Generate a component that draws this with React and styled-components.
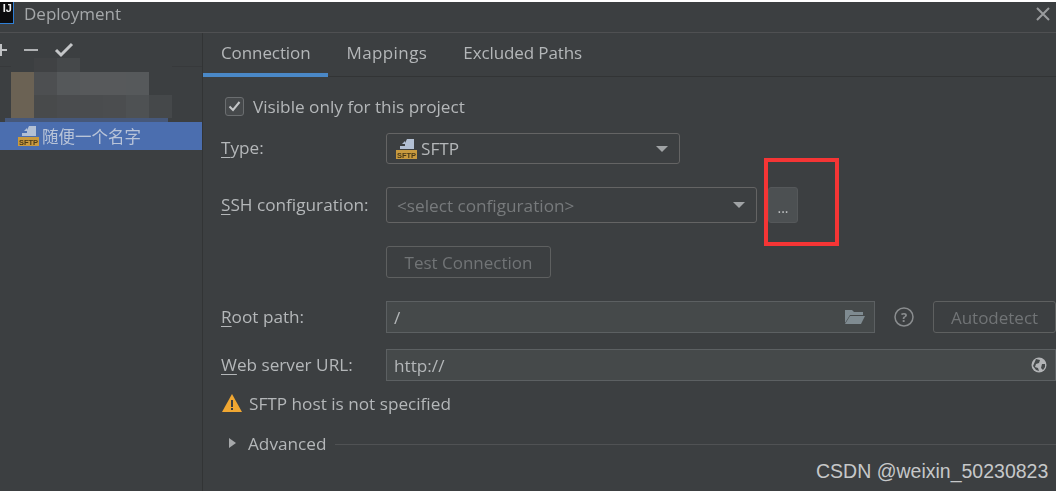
import React from 'react';
import styled, { createGlobalStyle } from 'styled-components';

const Global = createGlobalStyle`
  html, body { margin: 0; padding: 0; background: #fff; }
  body { width: 1064px; height: 491px; overflow: hidden; font-family: "Open Sans", "Noto Sans CJK SC", sans-serif; }
`;
const Page = styled.div`
  position: relative; width: 1056px; height: 489px; margin-top: 2px; overflow: hidden;
  background: #3c3f41;
`;
const Dialog = styled.div`
  display: flex; flex-direction: column; height: 100%; color: #b4b7b9; font-size: 17.2px;
  filter: blur(0.45px);
`;
const TitleBar = styled.header`
  flex: none; height: 31px; display: flex; align-items: flex-start; gap: 10px; box-sizing: border-box;
  border-bottom: 1px solid #4f5052; padding: 0 4px 0 0; color: #a5a8aa;
`;
const AppLogo = styled.div`
  width: 14px; height: 22px; box-sizing: border-box; background: #0c0c0e;
  border: 1px solid #2f7fd6; border-top: none; border-left: none; color: #eee; font: bold 11px/13px "Liberation Sans", sans-serif;
  text-align: right; padding-right: 1px; overflow: hidden;
`;
const Title = styled.span` flex: 1; font-size: 17px; line-height: 24px; `;
const Body = styled.div` flex: 1; display: flex; min-height: 0; `;
const Sidebar = styled.aside`
  flex: none; width: 203px; box-sizing: border-box; border-right: 1px solid #323435; display: flex; flex-direction: column;
`;
const Tools = styled.div`
  height: 34px; flex: none; box-sizing: border-box; display: flex; align-items: center; gap: 16px; margin-left: -6px;
  border-bottom: 1px solid #37393b;
`;
const Mosaic = styled.div`
  margin: -9px 0 0 11px; display: grid; grid-template-columns: repeat(7, 23px); grid-template-rows: 14px 23px 23px; filter: blur(0.6px);
`;
const Cell = styled.div` background: ${p => p.$c}; `;
const Sliver = styled.div` height: 4px; margin-left: 5px; width: 163px; background: #46587a; `;
const TreeRow = styled.div`
  height: 28px; background: #4b6eaf; display: flex; align-items: center; gap: 3px; padding-left: 17px; color: #b9c4d8; font-size: 16.5px;
`;
const Main = styled.main` flex: 1; min-width: 0; display: flex; flex-direction: column; `;
const Tabs = styled.nav`
  flex: none; height: 44px; display: flex; box-sizing: border-box; border-bottom: 1px solid #323435; font-size: 17px;
`;
const Tab = styled.div`
  box-sizing: border-box; height: 44px; display: flex; align-items: center; padding: 0 18px 1px;
  letter-spacing: ${p => p.$ls}px;
  border-bottom: 4px solid ${p => p.$active ? '#4a88c7' : 'transparent'};
`;
const Form = styled.div` flex: 1; padding: 19px 0 0 18px; display: flex; flex-direction: column; `;
const CheckRow = styled.label` display: flex; align-items: center; gap: 9px; height: 20px; margin-left: 4px; `;
const CheckBox = styled.span`
  width: 19px; height: 19px; box-sizing: border-box; border: 1px solid #6b6e70; border-radius: 3px; background: #46494b;
  display: flex; align-items: center; justify-content: center;
`;
const Row = styled.div`
  display: flex; align-items: center; height: ${p => p.$h}px; margin-top: ${p => p.$mt}px;
`;
const Label = styled.span` flex: none; width: 165px; margin-top: -2px; `;
const U = styled.span` text-decoration: underline; text-underline-offset: 3px; text-decoration-thickness: 1px; `;
const Combo = styled.div`
  box-sizing: border-box; width: ${p => p.$w}px; height: 100%; border: 1px solid #646464; border-radius: 3px;
  display: flex; align-items: center; padding: 0 11px 0 ${p => p.$pl || 8}px; gap: 4px; color: ${p => p.$dim ? '#777a7c' : '#b4b7b9'};
`;
const Grow = styled.span` flex: 1; `;
const Caret = styled.span`
  width: 0; height: 0; border-left: 6px solid transparent; border-right: 6px solid transparent; border-top: 6px solid #a0a3a5;
`;
const MoreBtn = styled.button`
  box-sizing: border-box; width: 30px; height: 100%; margin-left: 11px; border: 1px solid #55585a; border-radius: 3px; background: #4c5052;
  color: #c0c2c4; font: 14px/1 "Open Sans", sans-serif; padding: 6px 0 0;
`;
const Btn = styled.button`
  box-sizing: border-box; width: ${p => p.$w}px; height: 100%; border: 1px solid #5e6060; border-radius: 3px; background: transparent;
  color: #717476; font: 17px "Open Sans", sans-serif; padding: 0; margin-left: ${p => p.$ml || 0}px; flex: none; white-space: nowrap;
`;
const Field = styled.div`
  box-sizing: border-box; width: ${p => p.$w}px; height: 100%; border: 1px solid #5c6062; background: #45494a;
  display: flex; align-items: center; padding: 0 8px 0 7px; justify-content: space-between; flex: none;
`;
const Warning = styled.div` display: flex; align-items: center; gap: 7px; height: 24px; margin-top: 10px; `;
const Advanced = styled.div` display: flex; align-items: center; height: 24px; margin-top: 16px; padding-left: 8px; `;
const Arrow = styled.span`
  width: 0; height: 0; border-top: 5.5px solid transparent; border-bottom: 5.5px solid transparent; border-left: 7px solid #a6a8aa; margin-right: 12px;
`;
const Rule = styled.span` flex: 1; height: 1px; background: #505254; margin: 3px 0 0 9px; `;
const Highlight = styled.div`
  position: absolute; left: 764px; top: 156px; width: 75px; height: 88px; box-sizing: border-box; border: 4px solid #f53535;
`;
const Watermark = styled.div`
  position: absolute; left: 816px; top: 458px; color: #c6c8c9; font: 19.5px "Liberation Sans", sans-serif; white-space: nowrap;
`;
const Close = styled.svg` flex: none; margin: 4px 1px 0 0; `;

const SftpIcon = () => (
  <svg width="22" height="22" viewBox="0 0 22 22">
    <path d="M12 1h7v10H5V8h5V5z" fill="#b3c0d4" />
    <path d="M10 3v3H7z" fill="#b3c0d4" />
    <rect x="1" y="12" width="21" height="9" fill="#c99a3e" />
    <text x="11.5" y="19.6" textAnchor="middle" fontSize="7.5" fontWeight="700" fontFamily="Liberation Sans" fill="#4a3a18">SFTP</text>
  </svg>
);

const mosaic = [
  '#3c3f41','#404244','#45484a','#3c3f41','#3c3f41','#3c3f41','#3c3f41',
  '#6b6254','#4d4f51','#55585a','#57595b','#57595b','#56595b','#3c3f41',
  '#6b6254','#484a4b','#4a4c4e','#4a4c4e','#4b4d4f','#4e5153','#45484a',
];

export default function App() {
  return (
    <Page>
      <Global />
      <Dialog>
        <TitleBar>
          <AppLogo>IJ</AppLogo>
          <Title>Deployment</Title>
          <Close width="16" height="16" viewBox="0 0 16 16"><path d="M2 2l12 12M14 2L2 14" stroke="#9a9c9e" strokeWidth="2" /></Close>
        </TitleBar>
        <Body>
          <Sidebar>
            <Tools>
              <svg width="14" height="14" viewBox="0 0 14 14"><path d="M7 1v12M1 7h12" stroke="#c0c2c4" strokeWidth="2" /></svg>
              <svg width="14" height="14" viewBox="0 0 14 14"><path d="M0 7h14" stroke="#b0b2b4" strokeWidth="2" /></svg>
              <svg width="20" height="16" viewBox="0 0 20 16"><path d="M2 8l5 5L18 2" fill="none" stroke="#c4c6c8" strokeWidth="3" /></svg>
            </Tools>
            <Mosaic>{mosaic.map((c, i) => <Cell key={i} $c={c} />)}</Mosaic>
            <Sliver />
            <TreeRow><SftpIcon />随便一个名字</TreeRow>
          </Sidebar>
          <Main>
            <Tabs>
              <Tab $active $ls={-0.1}>Connection</Tab>
              <Tab $ls={0.4}>Mappings</Tab>
              <Tab $ls={-0.1}>Excluded Paths</Tab>
            </Tabs>
            <Form>
              <CheckRow>
                <CheckBox><svg width="13" height="11" viewBox="0 0 13 11"><path d="M1.5 5.5l3.5 3.5 6.5-8" fill="none" stroke="#c4c6c8" strokeWidth="2" /></svg></CheckBox>
                Visible only for this project
              </CheckRow>
              <Row $h={31} $mt={17}>
                <Label><U>T</U>ype:</Label>
                <Combo $w={294}><SftpIcon /><span>SFTP</span><Grow /><Caret /></Combo>
              </Row>
              <Row $h={36} $mt={23}>
                <Label><U>S</U>SH configuration:</Label>
                <Combo $w={371} $dim $pl={10}><span>&lt;select configuration&gt;</span><Grow /><Caret /></Combo>
                <MoreBtn>...</MoreBtn>
              </Row>
              <Row $h={32} $mt={23}>
                <Label />
                <Btn $w={165}>Test Connection</Btn>
              </Row>
              <Row $h={32} $mt={23}>
                <Label><U>R</U>oot path:</Label>
                <Field $w={489}>
                  <span>/</span>
                  <svg width="22" height="18" viewBox="0 0 22 18"><path d="M1 2h7l2 2h9v3H6L1 15z" fill="#7f8b91" /><path d="M6 8h15l-4 8H1z" fill="#7f8b91" /></svg>
                </Field>
                <svg width="20" height="20" viewBox="0 0 20 20" style={{ marginLeft: 19, flex: 'none' }}>
                  <circle cx="10" cy="10" r="9" fill="none" stroke="#8a8d8f" strokeWidth="1.5" />
                  <text x="10" y="15" textAnchor="middle" fontSize="13" fontWeight="700" fontFamily="Open Sans" fill="#8a8d8f">?</text>
                </svg>
                <Btn $w={123} $ml={19}>Autodetect</Btn>
              </Row>
              <Row $h={32} $mt={16}>
                <Label><U>W</U>eb server URL:</Label>
                <Field $w={670}>
                  <span>http://</span>
                  <svg width="16" height="16" viewBox="0 0 16 16">
                    <circle cx="8" cy="8" r="7.5" fill="#b2b4b6" />
                    <path d="M5 2l4 1-1 3-3 1-1 3 3 1 1 3-3-1-3-4zM11 7l3 0 0 3-2 3-2-2z" fill="#45494a" />
                  </svg>
                </Field>
              </Row>
              <Warning>
                <svg width="20" height="18" viewBox="0 0 20 18" style={{ flex: 'none', marginLeft: 1 }}>
                  <path d="M10 0l10 18H0z" fill="#f0a732" />
                  <path d="M9 6h2v7H9zM9 14h2v2H9z" fill="#3c3f41" />
                </svg>
                SFTP host is not specified
              </Warning>
              <Advanced><Arrow />Advanced<Rule /></Advanced>
            </Form>
          </Main>
        </Body>
      </Dialog>
      <Highlight />
      <Watermark>CSDN @weixin_50230823</Watermark>
    </Page>
  );
}
